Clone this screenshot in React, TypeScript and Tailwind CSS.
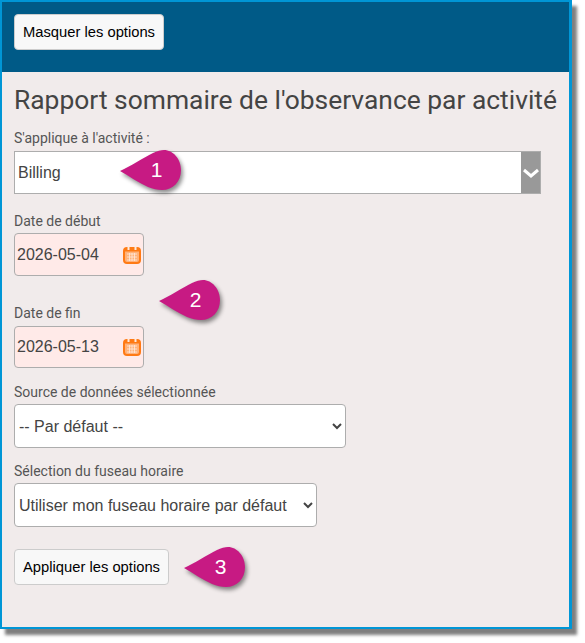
import React from 'react';

const Callout = ({ label, className }: { label: string; className: string }) => (
  <div className={`absolute w-[62px] h-[42px] ${className}`}>
    <svg viewBox="0 0 62 42" className="absolute inset-0 w-full h-full overflow-visible" style={{ filter: 'drop-shadow(2px 3px 2px rgba(0,0,0,0.45))' }}>
      <path d="M1 21 C12 16 24 8 34 3 C38 1 42 0 45 0 C54 0 62 9 62 20 C62 32 54 40 43 40 C38 40 34 39 29 37 C20 33 10 26 1 21 Z" fill="#c71a83" />
    </svg>
    <span className="absolute left-[13px] right-0 top-0 h-10 flex items-center justify-center text-white text-[21px] font-['Liberation_Sans',sans-serif]">
      {label}
    </span>
  </div>
);

const CalendarIcon = () => (
  <svg viewBox="0 0 18 18" className="w-[18px] h-[18px] shrink-0">
    <rect x="1" y="2" width="16" height="15" rx="3" fill="#ffb27a" stroke="#ff7a14" strokeWidth="2" />
    <rect x="1" y="2" width="16" height="3.5" fill="#ff7a14" />
    <rect x="4.5" y="0.5" width="2" height="3.5" fill="#ffe9dc" />
    <rect x="11.5" y="0.5" width="2" height="3.5" fill="#ffe9dc" />
    <path d="M4 8h10M4 11h10M4 14h10M6.5 7v8M9 7v8M11.5 7v8" stroke="#ffe9dc" strokeWidth="0.8" />
  </svg>
);

const DateField = ({ label, value, boxClass }: { label: string; value: string; boxClass: string }) => (
  <div>
    <label className="block text-sm leading-4 text-[#555]">{label}</label>
    <div className={`flex items-center justify-between w-[130px] pl-[2px] pr-[2px] bg-[#ffeae8] border border-[#adadad] rounded ${boxClass}`}>
      <span className="text-base text-[#444] font-['Liberation_Sans',sans-serif]">{value}</span>
      <CalendarIcon />
    </div>
  </div>
);

const Btn = ({ children, className }: { children: React.ReactNode; className: string }) => (
  <button className={`block h-9 bg-[#f8f8f8] border rounded text-[14.75px] text-black font-['Liberation_Sans',sans-serif] ${className}`}>
    {children}
  </button>
);

export default function App() {
  return (
    <div className="w-[585px] h-[643px] bg-white pt-0 font-['Roboto',sans-serif]">
      <div className="relative w-[572px] h-[629px] border-2 border-r-[3px] border-[#0096d6] bg-[#f1ebeb] shadow-[5px_6px_3px_rgba(0,0,0,0.5)]">
        <div className="h-[70px] bg-[#005a87] pt-3 pl-3">
          <Btn className="w-[150px] border-[#ccc]">Masquer les options</Btn>
        </div>
        <div className="pl-3 pt-[11px]">
          <h1 className="text-[26.4px] leading-[34px] text-[#444] whitespace-nowrap">Rapport sommaire de l'observance par activité</h1>

          <label className="block mt-[13px] text-sm leading-4 text-[#555]">S'applique à l'activité :</label>
          <div className="mt-[5px] flex w-[527px] h-[43px] bg-white border border-[#adadad]">
            <span className="flex-1 pl-[3px] text-base leading-[41px] text-[#444] font-['Liberation_Sans',sans-serif]">Billing</span>
            <div className="w-[19px] bg-[#999] flex items-center justify-center">
              <svg viewBox="0 0 18 12" className="w-[18px] h-3">
                <path d="M2 3l7 6 7-6" fill="none" stroke="#fff" strokeWidth="3" />
              </svg>
            </div>
          </div>

          <div className="mt-[19px]"><DateField label="Date de début" value="2026-05-04" boxClass="mt-1 h-[43px]" /></div>
          <div className="mt-[29px]"><DateField label="Date de fin" value="2026-05-13" boxClass="mt-[5px] h-[42px]" /></div>

          <label className="block mt-4 text-sm leading-4 text-[#555]">Source de données sélectionnée</label>
          <select className="block mt-1 w-[332px] h-11 bg-white border border-[#adadad] rounded text-base text-[#444] font-['Liberation_Sans',sans-serif]" defaultValue="d">
            <option value="d">-- Par défaut --</option>
          </select>

          <label className="block mt-[15px] text-sm leading-4 text-[#555]">Sélection du fuseau horaire</label>
          <select className="block mt-1 w-[303px] h-11 bg-white border border-[#adadad] rounded text-base text-[#444] font-['Liberation_Sans',sans-serif]" defaultValue="d">
            <option value="d">Utiliser mon fuseau horaire par défaut</option>
          </select>

          <Btn className="mt-[22px] w-[155px] border-[#ccc]">Appliquer les options</Btn>
        </div>

        <Callout label="1" className="left-[117px] top-[148px]" />
        <Callout label="2" className="left-[156px] top-[278px]" />
        <Callout label="3" className="left-[181px] top-[545px]" />
      </div>
    </div>
  );
}
